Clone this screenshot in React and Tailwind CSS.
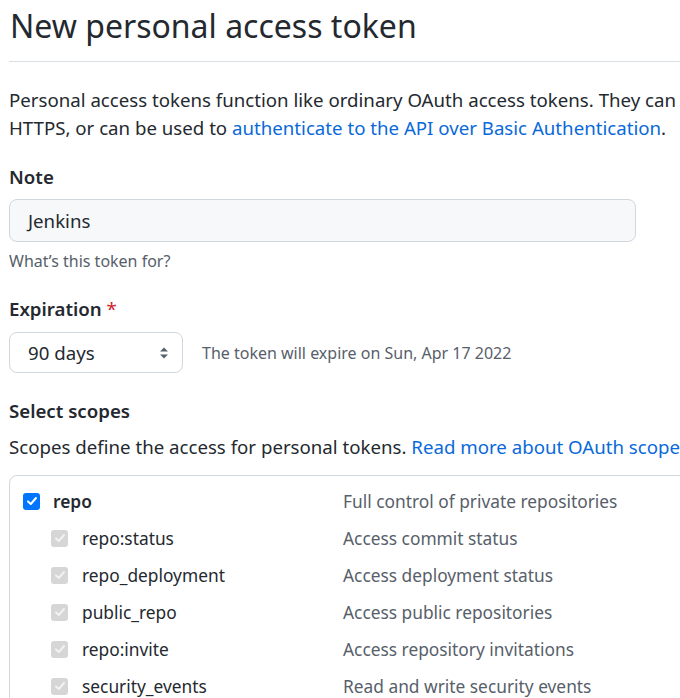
import React from "react";

const font = { fontFamily: '"Noto Sans", "Open Sans", sans-serif' };

function Check({ disabled }) {
  return (
    <span
      className={
        "flex h-[17px] w-[17px] shrink-0 items-center justify-center rounded-[3px] " +
        (disabled ? "bg-[#d6d6d6]" : "bg-[#0075ff]")
      }
    >
      <svg width="12" height="12" viewBox="0 0 12 12" fill="none">
        <path
          d="M2 6.4 L4.8 9 L10 3"
          stroke={disabled ? "#f2f2f2" : "#ffffff"}
          strokeWidth="2"
          strokeLinecap="round"
          strokeLinejoin="round"
        />
      </svg>
    </span>
  );
}

const subs = [
  ["repo:status", "Access commit status"],
  ["repo_deployment", "Access deployment status"],
  ["public_repo", "Access public repositories"],
  ["repo:invite", "Access repository invitations"],
  ["security_events", "Read and write security events"],
];

export default function App() {
  return (
    <div
      className="h-[698px] w-[680px] overflow-hidden bg-white pl-[9px] text-[18.67px] text-[#24292f]"
      style={font}
    >
      <div className="w-[700px] whitespace-nowrap">
        <div className="h-[62px] border-b border-[#d8dee4] pt-[2px]">
          <h1 className="pl-[1px] text-[32px] font-normal leading-[48px]">New personal access token</h1>
        </div>

        <p className="mt-[24px] leading-[28px]">
          Personal access tokens function like ordinary OAuth access tokens. They can be used instead of a password for Git over
          <br />
          HTTPS, or can be used to{" "}
          <span className="text-[#0969da]">authenticate to the API over Basic Authentication</span>.
        </p>

        <div className="mt-[21px] font-semibold leading-[28px]">Note</div>
        <div className="mt-[8px] flex h-[43px] w-[627px] items-center rounded-[8px] border border-[#d0d7de] bg-[#f6f8fa] pl-[18px]">
          Jenkins
        </div>
        <div className="mt-[7px] text-[16px] leading-[24px] text-[#57606a]">What’s this token for?</div>

        <div className="mt-[22px] font-semibold leading-[28px]">
          Expiration <span className="font-normal text-[#cf222e]">*</span>
        </div>
        <div className="mt-[9px] flex items-center">
          <div className="flex h-[41px] w-[174px] items-center justify-between rounded-[8px] border border-[#d0d7de] bg-white pl-[18px] pr-[12px]">
            <span>90 days</span>
            <svg width="12" height="16" viewBox="0 0 12 16" className="mt-[1px]">
              <path d="M2 6.5 L6 2.5 L10 6.5 Z" fill="#57606a" />
              <path d="M2 9.5 L6 13.5 L10 9.5 Z" fill="#57606a" />
            </svg>
          </div>
          <span className="ml-[19px] text-[16px] text-[#57606a]">The token will expire on Sun, Apr 17 2022</span>
        </div>

        <div className="mt-[24px] font-semibold leading-[28px]">Select scopes</div>
        <div className="mt-[8px] leading-[28px]">
          Scopes define the access for personal tokens.{" "}
          <span className="text-[#0969da]">Read more about OAuth scopes.</span>
        </div>

        <div className="mt-[14px] h-[300px] w-[720px] rounded-[8px] border border-[#d0d7de] pt-[7px] text-[17.33px]">
          <div className="flex h-[37px] items-center">
            <div className="flex w-[333px] items-center pl-[13px]">
              <Check />
              <span className="ml-[13px] font-semibold">repo</span>
            </div>
            <span className="text-[#57606a]">Full control of private repositories</span>
          </div>
          {subs.map(([name, desc]) => (
            <div key={name} className="flex h-[37px] items-center">
              <div className="flex w-[333px] items-center pl-[41px]">
                <Check disabled />
                <span className="ml-[14px]">{name}</span>
              </div>
              <span className="text-[#57606a]">{desc}</span>
            </div>
          ))}
        </div>
      </div>
    </div>
  );
}
